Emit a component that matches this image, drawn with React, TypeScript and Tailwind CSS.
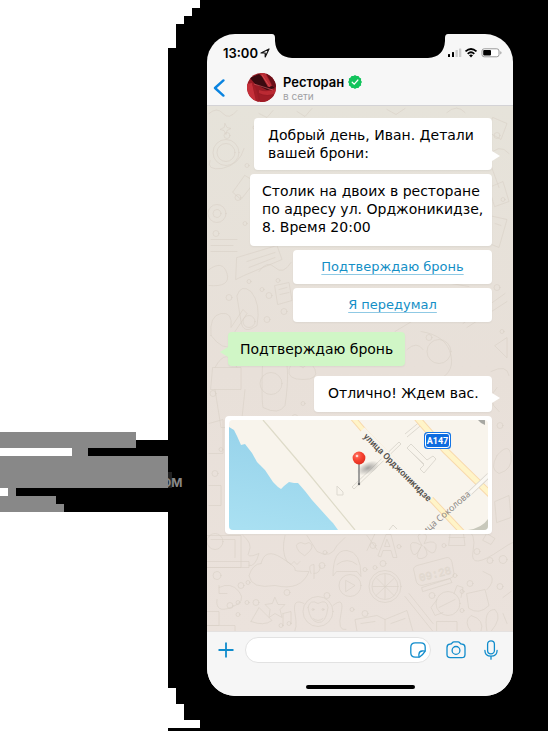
import { type ReactNode } from "react";

function Backdrop() {
  return (
    <svg
      className="absolute left-0 top-0"
      width="202"
      height="731"
      viewBox="0 0 202 731"
      shapeRendering="crispEdges"
      aria-hidden="true"
    >
      <path
        fill="#fff"
        d="M0 0H200V8H192V16H184V24H176V48H168V440H136V448H72V456H0ZM0 512H168V688H176V704H184V720H200V728H168V731H0ZM0 488H8V496H0Z"
      />
      <path
        fill="#888"
        d="M0 432H136V448H88V456H168V488H16V496H56V504H64V512H0V496H8V488H0V456H72V448H0Z"
      />
      <path fill="#222" d="M168 472H172V488H168Z" />
      <clipPath id="afterBlock">
        <path d="M168 470H190V490H168Z" />
      </clipPath>
      <text
        x="162"
        y="487"
        fill="#888"
        fontSize="12"
        fontWeight="700"
        fontFamily="Inter, 'Liberation Sans', sans-serif"
        clipPath="url(#afterBlock)"
      >
        ОМ
      </text>
    </svg>
  );
}

function Doodles() {
  const dots = [
    [20, 30, 3], [48, 22, 2], [40, 60, 2], [31, 92, 3], [38, 118, 2], [9, 128, 3], [290, 30, 3], [296, 94, 2],
    [22, 192, 3], [42, 176, 2], [62, 190, 3], [55, 184, 2], [60, 214, 3], [71, 175, 2], [290, 182, 3], [295, 226, 2],
    [222, 232, 3], [88, 312, 3], [102, 320, 2], [96, 298, 2], [6, 288, 3], [14, 344, 2], [8, 368, 3], [293, 320, 3],
    [10, 470, 4], [34, 480, 3], [41, 477, 2], [31, 497, 2], [23, 500, 3], [40, 497, 2], [49, 497, 3], [118, 447, 2],
    [115, 460, 3], [158, 464, 2], [168, 462, 2], [176, 458, 3], [166, 440, 3], [192, 441, 2], [248, 470, 2],
    [255, 486, 2], [263, 478, 3], [283, 455, 3], [296, 454, 4], [293, 481, 3], [120, 490, 3], [80, 487, 3],
    [225, 490, 3], [145, 504, 2], [158, 508, 3], [31, 509, 2], [255, 505, 2], [237, 440, 2], [270, 446, 3],
  ];
  return (
    <svg
      className="absolute inset-0 h-full w-full"
      viewBox="0 0 306 526"
      preserveAspectRatio="xMidYMid slice"
      fill="none"
      stroke="#d9d1c6"
      strokeOpacity="0.6"
      strokeWidth="1"
      strokeLinecap="round"
      strokeLinejoin="round"
      aria-hidden="true"
    >
      {dots.map(([x, y, r], i) => (
        <circle key={i} cx={x} cy={y} r={r} />
      ))}
      {/* planet, stars and meteors */}
      <circle cx="19" cy="47" r="13" />
      <circle cx="19" cy="47" r="9" />
      <path d="M3 55q-4 10 12 8q18-4 22-20M18 18l2 4 4 1-4 2-1 4-2-4-4-1 4-2zM2 8q8-7 14 0t14-3M38 70l10 6-14 18-8-7z" />
      <circle cx="10" cy="108" r="9" />
      <circle cx="10" cy="108" r="4" />
      <path d="M4 134h26M4 140h22M4 146h26M52 8l8 4 6-7M90 6l8 5 7-8M180 4l9 5 9-6M240 7q10-9 18 0" />
      {/* envelope, papers */}
      <path d="M30 152l40-12 5 14-38 16-8 4zM40 156l28-9M42 162l26-10M2 164q14-10 18 4t-18 12" />
      <path d="M52 166q8-12 16-4t16-5" />
      {/* guitar, rocket, camera */}
      <path d="M4 230q-2-20 10-22t10 14l12-18 4 4-12 18q8 8-2 14t-22-10zM30 190q4-12 14-4 10 12 6 34-14 10-16-4z" />
      <circle cx="42" cy="216" r="6" />
      <path d="M68 180l14-3 3 18-14 4zM72 184l8-2M73 189l9-2" />
      <circle cx="77" cy="206" r="3" />
      <path d="M6 262h28v22H4zM8 262q12-22 22 0M8 284l6 38h20l4-38M56 248q-2 42 0 54 16 8 22-2 6-40-2-54-12-10-20 2z" />
      <circle cx="64" cy="278" r="11" />
      <path d="M96 262q8-8 12 2t-12 10-14-10 14-2" />
      {/* right edge doodles */}
      <path d="M286 12l14 6-6 16-12-7zM280 52q12-16 22-4M282 82l14-6 6 20-14 5zM284 60l8 22M282 110l18 4-8 28-10-4zM288 118l6 2" />
      <path d="M230 166l52 12M232 176l30 5M256 218l42-30M260 222l40-26M220 214q14-24 28-8t22-9M214 226q26 4 30 24t-18 26" />
      <path d="M188 226l20-12M200 244q10-9 16 0M288 240l12-8v20zM284 266q16-8 18 4M290 282q-12 12 2 24" />
      <circle cx="232" cy="246" r="12" />
      {/* below map */}
      <path d="M290 350q12-14 14 0t-12 18q-10-4-2-18M2 318l14-4v34H2M2 380h12v20H2M288 396l14-6 2 22-14 5z" />
      {/* monitor and dinosaur */}
      <path d="M0 430h34v32H0M0 456h42v6H0M4 434h24v18M36 430q10 8 6 16t10 2q-4 14-10 12" />
      <circle cx="8" cy="436" r="8" />
      <path d="M54 458q4-16 20-6t14 12 14 2q-8 20-34 14-24 4-26-10 4-12 12-12M78 430q-4 16 2 26l4 3 3-3 3 3 3-3M12 482q12-6 20 4t-8 16-14-8M12 480v8h8" />
      <path d="M92 446q-6-8 2-9 4 3 8 0 8 4-4 13zM100 430l10 16q14 8 20-6l8-8" />
      <path d="M104 468q-4-9 3-9v14M107 468q7 0 6-8" />
      {/* car and play button */}
      <path d="M126 470q0-26 14-25t14 26l-4-5h-20zM130 459q10-8 20 0" />
      <circle cx="143" cy="480" r="11" />
      <path d="M139 475l9 5-9 6z" />
      {/* letter */}
      <path d="M171 450l8-21h5l6 23h-4l-2-7h-8l-2 6zM178 441h5l-3-7zM160 430l10 14M168 428l-8 17" />
      {/* bow */}
      <path d="M215 440q-14-8-11 4t10-3q-8 14 1 12t2-12q10 12 12 2t-12-5q6-10-2-10t0 12M244 424h12l2 16h-16zM242 432h16" />
      {/* citrus slice */}
      <circle cx="178" cy="481" r="16" />
      <circle cx="178" cy="481" r="13" />
      <path d="M178 469v24M166 481h24M170 473l17 17M187 473l-18 17" />
      {/* alarm clock */}
      <path d="M207 466q-2-4 3-6l30-8q4 0 5 5l2 11q0 4-4 5l-28 7q-5 0-6-5zM215 482l28-9 2 4-29 9z" />
      <text x="213" y="476" transform="rotate(-14 213 476)" fontSize="11" fontFamily="'Liberation Mono', monospace" strokeWidth="0.7">09:28</text>
      {/* monkey */}
      <circle cx="111" cy="506" r="15" />
      <path d="M97 498q-12-6-9 10t-2 20M126 500q12-10 8 8t5 16M101 502q2-9 10-4 9-5 10 4-2 16-10 15t-10-15M106 513q5 4 10 0" />
      <circle cx="106" cy="504" r="1" />
      <circle cx="116" cy="504" r="1" />
      {/* stars, notes, books */}
      <path d="M68 492l3 7 7 0-5 5 2 8-7-4-6 4 1-8-5-5 7-1zM44 516l8-14 13 13q-8 6-21 1M76 508l8-2v12M76 508v12" />
      <circle cx="74" cy="520" r="2" />
      <circle cx="82" cy="518" r="2" />
      <path d="M150 526l-2-12 22-4 8 4 22-9 6 21M178 514v12M184 518l14-5M154 518l14-2M198 491l28 35M202 488l24 30" />
      {/* candy, cup, leaves */}
      <circle cx="241" cy="498" r="12" />
      <path d="M230 494l-6 8 4 8 8-3M247 488l3-8 6 2-2 10M232 502l16-8M260 488l18-4 4 16q-10 10-20 3zM280 484q8-8 4-14l-8-4" />
      <path d="M264 526q-8-10 0-16 14 4 10 16M280 526q-4-22 8-22 8 8-4 22M296 492l8-6M296 508l4 10M258 424q12 2 8 22t28-2 12 12M280 428l8 5-4 6-8-4zM230 516h20v10h-20z" />
      <path d="M0 506h12v14H0M0 520h28v6" />
    </svg>
  );
}

function StatusBar() {
  return (
    <div className="flex h-7 justify-between">
      <div className="flex flex-1 items-center justify-end pt-2.5">
        <div className="mr-0.5 flex items-center gap-0.5">
          <span className="text-[13px] leading-4 font-semibold text-black">13:00</span>
          <svg width="10" height="10" viewBox="0 0 10 10" fill="none" stroke="#111" strokeWidth="1.2" strokeLinejoin="round" aria-hidden="true">
            <path d="M1 5L9 1 5.2 9V5Z" />
          </svg>
        </div>
      </div>
      <svg width="176" height="24" viewBox="0 0 176 24" aria-hidden="true">
        <path d="M0 0Q3 0 3 4V7Q4 23 20 24H156Q172 23 173 7V4Q173 0 176 0Z" fill="#000" />
      </svg>
      <div className="flex flex-1 items-center justify-start pt-2.5">
        <svg width="56" height="10" viewBox="0 0 56 10" aria-label="Сигнал, Wi-Fi, батарея" role="img">
          <rect x="0" y="6" width="2" height="3" rx="0.5" />
          <rect x="4" y="4" width="2" height="5" rx="0.5" />
          <rect x="7.5" y="2" width="2.3" height="7" rx="0.5" fill="#ccc" />
          <rect x="11" y="0.5" width="2.3" height="8.5" rx="0.5" fill="#ccc" />
          <g fill="none" stroke="#000" strokeWidth="1.8">
            <path d="M17.5 3.4Q23 -1.4 28.5 3.4" />
            <path d="M19.7 5.8Q23 2.8 26.3 5.8" />
          </g>
          <path d="M21 7.2Q23 5.8 25 7.2L23 9.4Z" />
          <rect x="34" y="0.8" width="17" height="8" rx="2.2" fill="#fff" stroke="#999" />
          <rect x="35.2" y="2" width="7.8" height="5.6" rx="1" />
          <path d="M52.3 3.2q1.2.4 1.2 1.6t-1.2 1.6z" fill="#999" />
        </svg>
      </div>
    </div>
  );
}

function ChatHeader() {
  return (
    <header className="flex h-11 items-center border-b border-[#d4d3d6] pt-2 pl-1.5">
      <button type="button" aria-label="Назад" className="w-[34px]">
        <svg width="12" height="18" viewBox="0 0 12 18" fill="none" stroke="#0a84e0" strokeWidth="2.4" strokeLinecap="round" strokeLinejoin="round">
          <path d="M10.4 1.4L2 9L10.4 16.6" />
        </svg>
      </button>
      <svg width="29" height="29" viewBox="0 0 29 29" role="img" aria-label="Фото ресторана">
        <clipPath id="avatar">
          <circle cx="14.5" cy="14.5" r="14.5" />
        </clipPath>
        <g clipPath="url(#avatar)">
          <path fill="#9a1b25" d="M0 0h29v29H0z" />
          <path fill="#3a0a10" d="M3 5L12 1 28 15 20 17 8 11Z" />
          <path fill="#b92d35" d="M13 0L18 0 25 13 21 14Z" />
          <path fill="#6c0f18" d="M19 0H29V14H26Z" />
          <path fill="#c5303a" d="M0 11L5 10 10 29H0Z" />
          <path fill="#a41d27" d="M5 10Q10 14 12 29H9Z" />
          <path fill="#bb2a33" d="M12 17Q20 20 29 16V20Q20 24 12 20Z" />
          <path fill="#a01c26" d="M12 21Q20 25 29 21V29H13Z" />
          <path d="M7 11L26 17M15 2L23 14" stroke="#e3636a" strokeWidth="0.6" fill="none" />
        </g>
      </svg>
      <div className="pl-[7px]">
        <div className="flex items-center gap-1">
          <h1 className="text-[13px] leading-4 font-semibold text-black">Ресторан</h1>
          <svg width="14" height="14" viewBox="0 0 14 14" role="img" aria-label="Подтверждённый аккаунт">
            <path
              fill="#12c45c"
              d="M7 0L8.6 1 10.5.9 11.4 2.6 13.1 3.5 13 5.4 14 7 13 8.6 13.1 10.5 11.4 11.4 10.5 13.1 8.6 13 7 14 5.4 13 3.5 13.1 2.6 11.4.9 10.5 1 8.6 0 7 1 5.4.9 3.5 2.6 2.6 3.5.9 5.4 1Z"
            />
            <path d="M4.2 7.2L6.2 9.1 9.9 5" fill="none" stroke="#fff" strokeWidth="1.2" strokeLinecap="round" />
          </svg>
        </div>
        <p className="text-[10px] leading-3 text-[#a0a0a3]">в сети</p>
      </div>
    </header>
  );
}

function Tail({ side }: { side: "left" | "right" }) {
  return side === "right" ? (
    <svg className="absolute -right-2 bottom-2" width="8" height="12" viewBox="0 0 8 12" aria-hidden="true">
      <path d="M0 1L8 6L0 11Z" fill="#fff" />
    </svg>
  ) : (
    <svg className="absolute bottom-2 -left-2" width="8" height="12" viewBox="0 0 8 12" aria-hidden="true">
      <path d="M8 1L0 6L8 11Z" fill="#d0f6c6" />
    </svg>
  );
}

function Bubble({ children, className, tail = false }: { children: ReactNode; className: string; tail?: boolean }) {
  return (
    <div className={`relative rounded bg-white pt-2 text-sm leading-[18px] text-black shadow-xs ${className}`}>
      {children}
      {tail && <Tail side="right" />}
    </div>
  );
}

function ReplyOption({ children }: { children: ReactNode }) {
  return (
    <div className="w-[199px] rounded bg-white py-2 text-center text-[13px] leading-[18px] shadow-xs">
      <a href="#reply" className="text-[#148fc6] underline decoration-[#8fc9e4] underline-offset-3">
        {children}
      </a>
    </div>
  );
}

function LocationCard() {
  return (
    <div className="w-[267px] rounded bg-white p-1 shadow-xs">
      <svg
        className="block w-full rounded"
        viewBox="0 0 259 110"
        role="img"
        aria-label="Карта: улица Орджоникидзе"
        fontFamily="Roboto, 'Noto Sans', sans-serif"
      >
        <defs>
          <linearGradient id="sea" x1="0.4" y1="0" x2="0.2" y2="1">
            <stop offset="0" stopColor="#96d2ea" />
            <stop offset="1" stopColor="#a9e0f2" />
          </linearGradient>
          <radialGradient id="pinHead" cx="0.35" cy="0.3" r="0.8">
            <stop offset="0" stopColor="#ff7564" />
            <stop offset="0.5" stopColor="#f7412f" />
            <stop offset="1" stopColor="#d92a1c" />
          </radialGradient>
          <radialGradient id="pinShade">
            <stop offset="0" stopColor="#777" stopOpacity="0.65" />
            <stop offset="1" stopColor="#777" stopOpacity="0" />
          </radialGradient>
        </defs>
        <path fill="#f8f4ec" d="M0 0H259V110H0Z" />
        <path
          fill="url(#sea)"
          d="M0 7L5 10 8 16 12 25 16 24 23 33 28 42 31 45 36 50 44 62 49 67 52 69 55 66 60 62 65 63 69 63 76 71 83 80 92 90 101 100 104 103 109 110H0Z"
        />
        <path d="M34 0L40 7 80 54 126 110" fill="none" stroke="#dedbc9" strokeWidth="1.2" />
        <g fill="none" stroke="#ddd9d0" strokeWidth="1">
          <path d="M123 67L170 22L172 24L125 69ZM108 66L114 72V75H108ZM176 14L193 0M178 17L196 2M178 28L182 24L198 40 204 36 207 39 195 53 191 49 195 45ZM181 31L195 44M160 110L164 105 168 109" />
        </g>
        <g fill="none">
          <path d="M124 -2L136 12 203 80 235 114" stroke="#f8d9ad" strokeWidth="6" />
          <path d="M124 -2L136 12 203 80 235 114" stroke="#fff4c8" strokeWidth="4" />
          <path d="M188 -2L216 30 262 75" stroke="#f8d9ad" strokeWidth="7" />
          <path d="M188 -2L216 30 262 75" stroke="#fff4c8" strokeWidth="5" />
          <path d="M132 11L201 80" stroke="#f8f4ec" strokeWidth="10" />
          <path d="M241 73L260 55" stroke="#d8d4cc" strokeWidth="5" />
          <path d="M241 73L260 55" stroke="#faf8f3" strokeWidth="3.4" />
        </g>
        <path d="M249 0L252 3 256 5V0Z" fill="#a7a7a2" />
        <path d="M239 110Q253 108 259 99V110Z" fill="#c8c8bb" />
        <text x="134" y="17" transform="rotate(45 134 17)" fontSize="9" fontWeight="600" fill="#55524e">
          улица Орджоникидзе
        </text>
        <text
          x="242"
          y="75"
          textAnchor="end"
          transform="rotate(-41 242 75)"
          fontSize="9"
          fontFamily="'Open Sans', 'Noto Sans', sans-serif"
          fill="#858280"
        >
          улица Соколова
        </text>
        <rect x="195" y="12" width="27" height="17" rx="3.5" fill="#1475e6" />
        <rect x="196.5" y="13.5" width="24" height="14" rx="2.5" fill="#0e6cdf" stroke="#fff" strokeWidth="1" />
        <text x="208.5" y="24" textAnchor="middle" fontSize="9" fontWeight="700" fill="#fff">
          А147
        </text>
        <ellipse cx="139" cy="48" rx="12" ry="6" fill="url(#pinShade)" transform="rotate(-24 139 48)" />
        <path d="M130 43V64" stroke="#8a8a8a" strokeWidth="1.6" strokeLinecap="round" />
        <circle cx="130" cy="64" r="1.2" fill="#666" />
        <circle cx="130" cy="38" r="6.4" fill="url(#pinHead)" />
        <circle cx="128" cy="36" r="1.3" fill="#ffd9d2" />
      </svg>
    </div>
  );
}

function Composer() {
  return (
    <footer className="flex flex-col items-center gap-[22px] border-t border-[#e4e1e0] bg-[#f6f6f6] pt-[5px] pb-[7px] text-[#108ccc]">
      <div className="flex w-full items-center pr-[15px] pl-[11px]">
        <button type="button" aria-label="Добавить вложение" className="mr-[11px]">
          <svg width="16" height="16" viewBox="0 0 16 16" fill="none" stroke="currentColor" strokeWidth="1.8">
            <path d="M8 0.5V15.5M0.5 8H15.5" />
          </svg>
        </button>
        <div className="flex h-[26px] min-w-0 flex-1 items-center rounded-full border border-[#e2e2e2] bg-white pr-1 pl-3">
          <input aria-label="Сообщение" className="h-5 min-w-0 flex-1 bg-transparent text-sm text-black outline-none" />
          <button type="button" aria-label="Стикеры">
            <svg width="16" height="16" viewBox="0 0 16 16" fill="none" stroke="currentColor" strokeWidth="1.3" strokeLinejoin="round">
              <path d="M9.3 15.2H5.2Q0.8 15.2 0.8 10.8V5.2Q0.8 0.8 5.2 0.8H10.8Q15.2 0.8 15.2 5.2V9.2Q13 12.9 9.3 15.2Z" />
              <path d="M9.2 15.2Q8.8 13.8 8.9 12.2Q9.2 9.2 12.2 9Q13.8 8.9 15.2 9.2" />
            </svg>
          </button>
        </div>
        <button type="button" aria-label="Камера" className="mr-[18px] ml-[15px]">
          <svg width="20" height="18" viewBox="0 0 20 18" fill="none" stroke="currentColor" strokeWidth="1.3" strokeLinejoin="round">
            <path d="M4 3.2Q5.4 3.2 6.2 1.9Q6.9 0.9 8 0.9H12Q13.1 0.9 13.8 1.9Q14.6 3.2 16 3.2Q19 3.4 19 6.4V13.4Q19 16.6 15.8 16.6H4.2Q1 16.6 1 13.4V6.4Q1 3.4 4 3.2Z" />
            <circle cx="10" cy="9.4" r="3.9" />
          </svg>
        </button>
        <button type="button" aria-label="Голосовое сообщение">
          <svg width="14" height="20" viewBox="0 0 14 20" fill="none" stroke="currentColor" strokeWidth="1.3" strokeLinecap="round">
            <rect x="3.6" y="0.8" width="6.8" height="13" rx="3.4" />
            <path d="M0.9 10.4Q1 16.2 7 16.2T13.1 10.4M7 16.2V19.2" />
          </svg>
        </button>
      </div>
      <div className="h-1 w-[109px] rounded-full bg-black" />
    </footer>
  );
}

export default function App() {
  return (
    <div className="relative flex min-h-screen bg-black pt-[34px] pr-[35px] pb-[35px] pl-[207px]">
      <Backdrop />
      <main className="relative flex min-w-0 flex-1 flex-col overflow-hidden rounded-[28px] bg-[#f7f7f7] font-['Inter','Liberation_Sans',sans-serif]">
        <StatusBar />
        <ChatHeader />
        <section
          aria-label="Переписка"
          className="relative flex-1 bg-linear-to-b from-[#e6e3da] via-[#e8e0d9] to-[#ebe2dc] font-['DejaVu_Sans','Noto_Sans',sans-serif]"
        >
          <Doodles />
          <div className="relative flex flex-col items-end gap-1 pt-3 pr-[21px] pb-4 pl-[18px]">
            <Bubble className="w-[238px] pb-2 pl-3.5" tail>
              Добрый день, Иван. Детали
              <br />
              вашей брони:
            </Bubble>
            <Bubble className="w-[242px] pb-2.5 pl-3">
              Столик на двоих в ресторане
              <br />
              по адресу ул. Орджоникидзе,
              <br />
              8. Время 20:00
            </Bubble>
            <ReplyOption>Подтверждаю бронь</ReplyOption>
            <ReplyOption>Я передумал</ReplyOption>
            <div className="relative my-1.5 ml-[3px] w-[177px] self-start rounded bg-[#d0f6c6] py-2 pl-3 text-sm leading-[18px] text-black shadow-xs">
              Подтверждаю бронь
              <Tail side="left" />
            </div>
            <Bubble className="w-[178px] pb-2.5 pl-3.5" tail>
              Отлично! Ждем вас.
            </Bubble>
            <LocationCard />
          </div>
        </section>
        <Composer />
      </main>
    </div>
  );
}
